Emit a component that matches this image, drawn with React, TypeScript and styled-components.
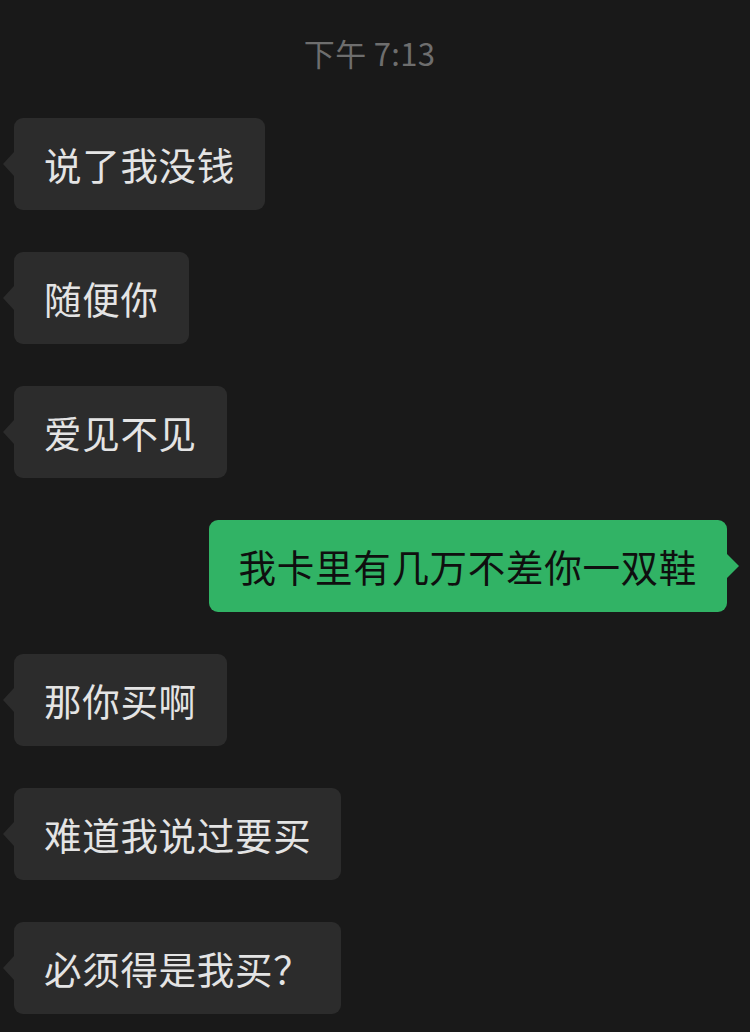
import React from "react";
import styled, { createGlobalStyle } from "styled-components";

const Global = createGlobalStyle`
  html, body {
    margin: 0;
    padding: 0;
    background: #191919;
  }
  body {
    font-family: "Noto Sans CJK SC", "Noto Sans", sans-serif;
  }
`;

const Screen = styled.div`
  width: 750px;
  min-height: 1032px;
  background: #191919;
  display: flex;
  flex-direction: column;
  padding: 33px 23px 0 14px;
  box-sizing: border-box;
`;

const Time = styled.div`
  align-self: center;
  margin-left: -2px;
  font-size: 31px;
  line-height: 40px;
  color: #6e6e6e;
  margin-bottom: 45px;
  letter-spacing: 0.3px;
  font-family: "Noto Sans CJK SC", "Noto Sans", sans-serif;
`;

const List = styled.div`
  display: flex;
  flex-direction: column;
  gap: 42px;
`;

const Row = styled.div<{ $me?: boolean }>`
  display: flex;
  justify-content: ${(p) => (p.$me ? "flex-end" : "flex-start")};
`;

const Bubble = styled.div<{ $me?: boolean }>`
  position: relative;
  height: 92px;
  padding: 0 30px;
  border-radius: 9px;
  background: ${(p) => (p.$me ? "#31b365" : "#2c2c2c")};
  color: ${(p) => (p.$me ? "#0f0f0f" : "#e4e4e4")};
  font-size: 37.5px;
  line-height: 92px;
  white-space: nowrap;
  letter-spacing: 0.7px;

  &::before {
    content: "";
    position: absolute;
    top: 34px;
    ${(p) => (p.$me ? "right: -12px;" : "left: -11px;")}
    width: 0;
    height: 0;
    border-top: 12px solid transparent;
    border-bottom: 12px solid transparent;
    ${(p) =>
      p.$me
        ? "border-left: 12px solid #31b365;"
        : "border-right: 11px solid #2c2c2c;"}
  }
`;

const messages: { text: string; me?: boolean }[] = [
  { text: "说了我没钱" },
  { text: "随便你" },
  { text: "爱见不见" },
  { text: "我卡里有几万不差你一双鞋", me: true },
  { text: "那你买啊" },
  { text: "难道我说过要买" },
  { text: "必须得是我买？" },
];

export default function App() {
  return (
    <>
      <Global />
      <Screen>
        <Time>下午 7:13</Time>
        <List>
          {messages.map((m, i) => (
            <Row key={i} $me={m.me}>
              <Bubble $me={m.me}>{m.text}</Bubble>
            </Row>
          ))}
        </List>
      </Screen>
    </>
  );
}
